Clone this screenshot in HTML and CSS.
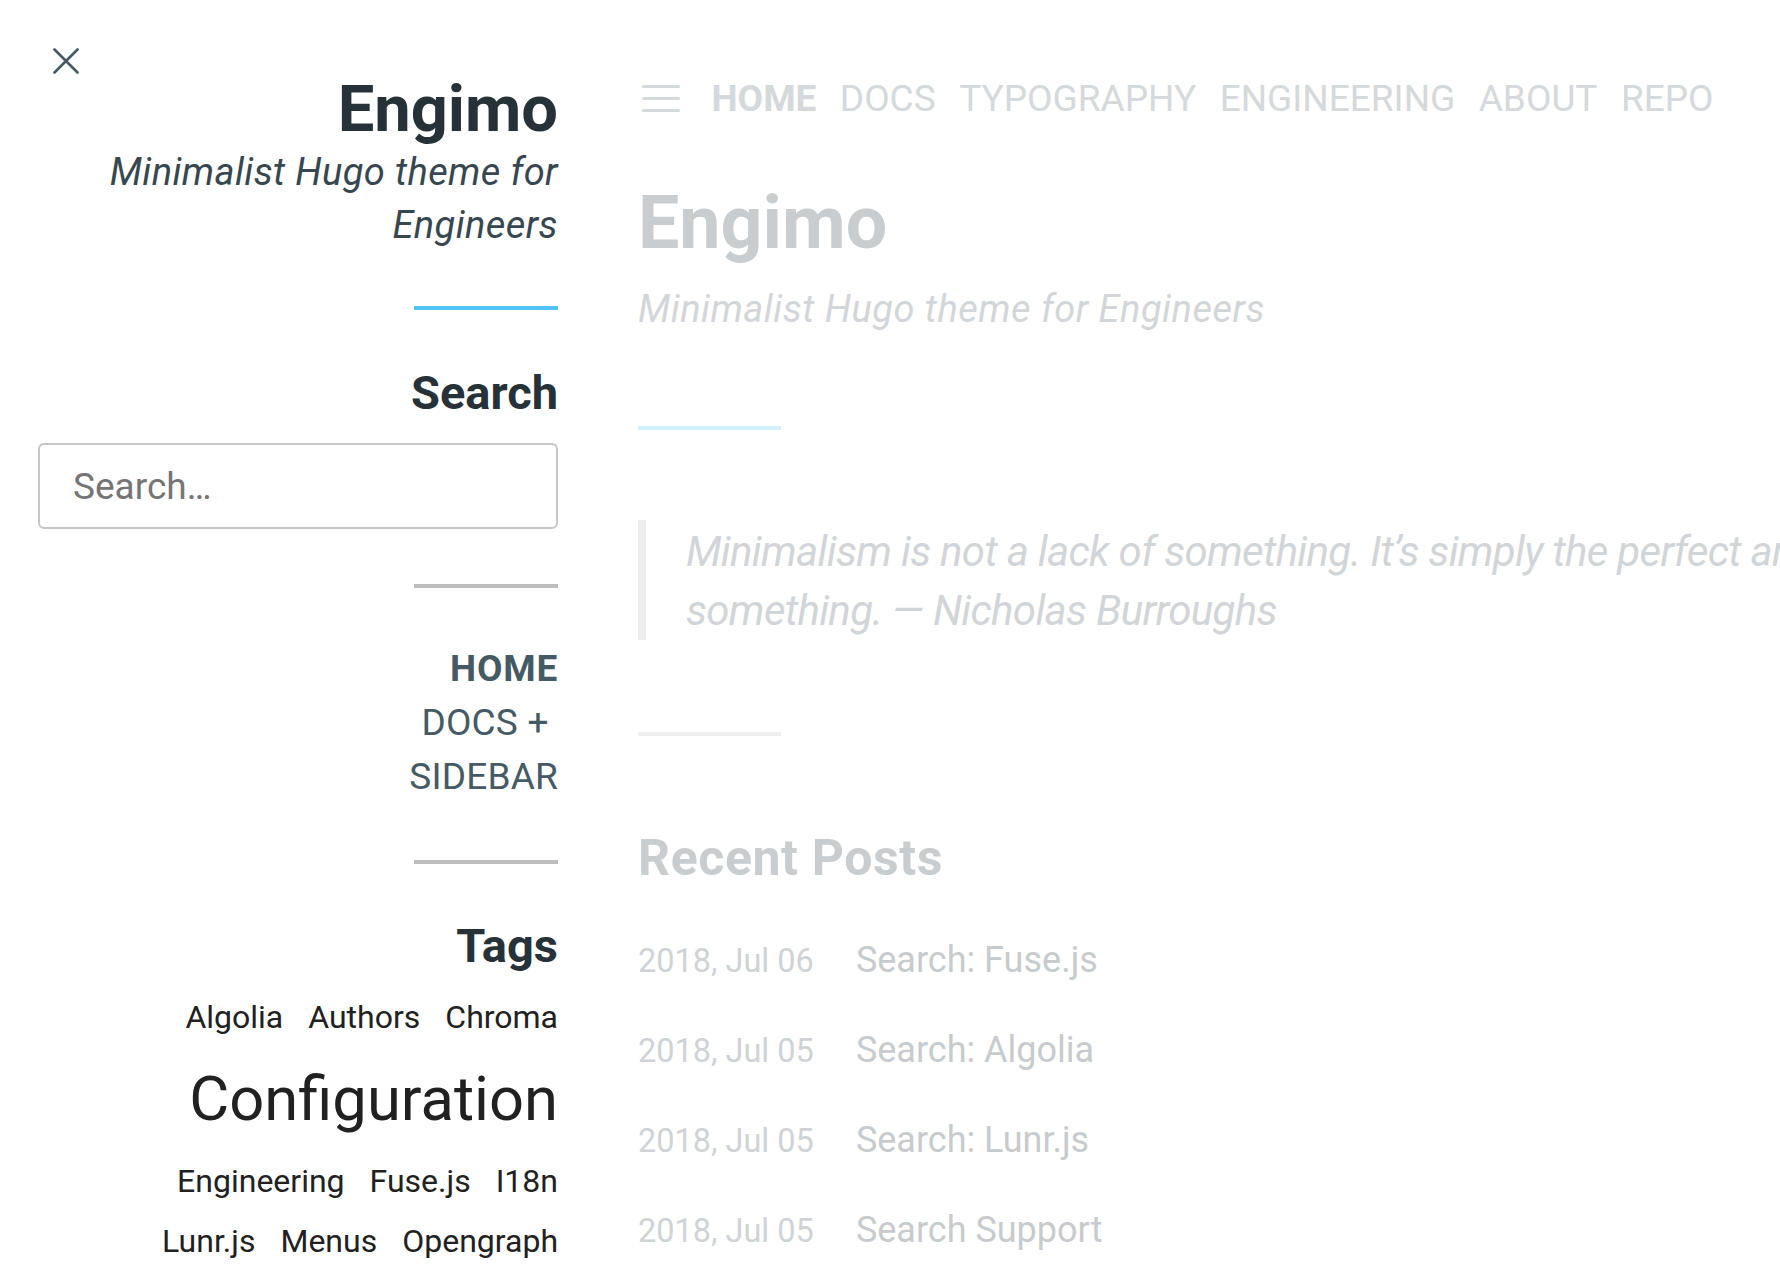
FILE: index.html
```html
<!DOCTYPE html>
<html lang="en">
<head>
<meta charset="utf-8">
<title>Engimo</title>
<link rel="stylesheet" href="styles.css">
</head>
<body>
<div class="layout">
  <aside class="sidebar">
    <button class="close" aria-label="Close sidebar">
      <svg width="26" height="26" viewBox="0 0 26 26"><path d="M1.5 1.5 L24.5 24.5 M24.5 1.5 L1.5 24.5" stroke="#455a64" stroke-width="2.6" stroke-linecap="round" fill="none"/></svg>
    </button>
    <header class="brand">
      <h1 class="brand-title">Engimo</h1>
      <p class="brand-sub">Minimalist Hugo theme for Engineers</p>
    </header>
    <hr class="rule rule-blue">
    <section class="widget">
      <h2 class="widget-title">Search</h2>
      <input class="search-input" type="text" placeholder="Search…">
    </section>
    <hr class="rule rule-gray rule-search">
    <nav class="side-nav">
      <a class="side-link active" href="#">HOME</a>
      <a class="side-link" href="#">DOCS +&nbsp; SIDEBAR</a>
    </nav>
    <hr class="rule rule-gray rule-nav">
    <section class="widget">
      <h2 class="widget-title tags-title">Tags</h2>
      <ul class="tag-cloud">
        <li><a href="#">Algolia</a></li>
        <li><a href="#">Authors</a></li>
        <li><a href="#">Chroma</a></li>
        <li class="tag-big"><a href="#">Configuration</a></li>
        <li><a href="#">Engineering</a></li>
        <li><a href="#">Fuse.js</a></li>
        <li><a href="#">I18n</a></li>
        <li><a href="#">Lunr.js</a></li>
        <li><a href="#">Menus</a></li>
        <li><a href="#">Opengraph</a></li>
      </ul>
    </section>
  </aside>

  <main class="content">
    <div class="topnav">
      <svg class="burger" width="38" height="27" viewBox="0 0 38 27"><path d="M1.5 1.5 H36.5 M1.5 13.5 H36.5 M1.5 25.5 H36.5" stroke="#d5d9dc" stroke-width="3" stroke-linecap="round" fill="none"/></svg>
      <a class="top-link active" href="#">HOME</a>
      <a class="top-link" href="#">DOCS</a>
      <a class="top-link" href="#">TYPOGRAPHY</a>
      <a class="top-link" href="#">ENGINEERING</a>
      <a class="top-link" href="#">ABOUT</a>
      <a class="top-link" href="#">REPO</a>
    </div>
    <h1 class="site-title">Engimo</h1>
    <p class="site-sub">Minimalist Hugo theme for Engineers</p>
    <hr class="rule rule-blue-faded">
    <blockquote class="quote">Minimalism is not a lack of something. It’s simply the perfect amount of<br>something. — Nicholas Burroughs</blockquote>
    <hr class="rule rule-gray-faded">
    <h2 class="recent-title">Recent Posts</h2>
    <ul class="post-list">
      <li><span class="post-date">2018, Jul 06</span><a class="post-title" href="#">Search: Fuse.js</a></li>
      <li><span class="post-date">2018, Jul 05</span><a class="post-title" href="#">Search: Algolia</a></li>
      <li><span class="post-date">2018, Jul 05</span><a class="post-title" href="#">Search: Lunr.js</a></li>
      <li><span class="post-date">2018, Jul 05</span><a class="post-title" href="#">Search Support</a></li>
    </ul>
  </main>
</div>
</body>
</html>
```

FILE: styles.css
```css
html, body {
  margin: 0;
  padding: 0;
  background: #ffffff;
  overflow: hidden;
}

body {
  font-family: Roboto, "Liberation Sans", sans-serif;
  width: 1780px;
  height: 1288px;
}

a {
  text-decoration: none;
  color: inherit;
}

.layout {
  display: flex;
  align-items: flex-start;
  gap: 58px;
}

/* ---------- Sidebar ---------- */
.sidebar {
  flex: 0 0 580px;
  box-sizing: border-box;
  padding: 0 22px 0 38px;
  text-align: right;
  background: #ffffff;
}

.close {
  display: block;
  margin: 48px 0 0 15px;
  padding: 0;
  border: 0;
  background: none;
  width: 26px;
  height: 26px;
  line-height: 0;
  cursor: pointer;
}

.brand-title {
  margin: 3px 0 0;
  font-size: 65px;
  line-height: 64px;
  font-weight: 700;
  color: #263238;
}

.brand-sub {
  margin: 5px 0 0;
  font-size: 38px;
  line-height: 53px;
  letter-spacing: 0.4px;
  font-style: italic;
  color: #37474f;
}

.rule {
  display: block;
  border: 0;
  height: 4px;
  width: 144px;
  padding: 0;
}

.rule-blue {
  margin: 54px 0 0 auto;
  background: #4fc3f7;
}

.widget-title {
  margin: 60px 0 0;
  font-size: 47px;
  line-height: 46px;
  font-weight: 700;
  color: #263238;
}

.search-input {
  display: block;
  box-sizing: border-box;
  width: 100%;
  height: 86px;
  margin: 27px 0 0;
  padding: 0 33px;
  border: 2px solid #c6c6c6;
  border-radius: 6px;
  font-family: Roboto, "Liberation Sans", sans-serif;
  font-size: 37px;
  color: #333;
  background: #fff;
  outline: none;
}

.search-input::placeholder {
  color: #757575;
}

.rule-gray {
  background: #bdbdbd;
  margin-left: auto;
  margin-right: 0;
}

.rule-search {
  margin-top: 55px;
}

.side-nav {
  margin-top: 54px;
  display: flex;
  flex-direction: column;
  align-items: flex-end;
  font-size: 37px;
  line-height: 54px;
  color: #455a64;
}

.side-link {
  max-width: 160px;
  letter-spacing: 0.2px;
}

.side-link.active {
  font-weight: 700;
  letter-spacing: 0.8px;
}

.rule-nav {
  margin-top: 56px;
}

.tags-title {
  margin-top: 59px;
}

.tag-cloud {
  list-style: none;
  margin: 18px 0 0 auto;
  padding: 0;
  max-width: 470px;
  display: flex;
  flex-wrap: wrap;
  justify-content: flex-end;
  align-items: baseline;
  column-gap: 25px;
  font-size: 32px;
  line-height: 60px;
  color: #212121;
}

.tag-big {
  font-size: 61.5px;
  line-height: 104px;
}

/* ---------- Main (dimmed behind open sidebar) ---------- */
.content {
  flex: 0 0 1500px;
}

.topnav {
  margin-top: 78px;
  height: 40px;
  display: flex;
  align-items: center;
  gap: 23.5px;
  font-size: 37px;
  line-height: 37px;
  color: #d5d9dc;
}

.burger {
  display: block;
  margin-left: 4px;
  margin-right: 8px;
}

.top-link.active {
  font-weight: 700;
}

.site-title {
  margin: 69px 0 0;
  font-size: 73.5px;
  line-height: 72px;
  font-weight: 700;
  color: #c9cdd0;
}

.site-sub {
  margin: 32px 0 0;
  font-size: 38px;
  line-height: 36px;
  letter-spacing: 0.5px;
  font-style: italic;
  color: #d3d6d9;
}

.rule-blue-faded {
  margin: 99px 0 0;
  width: 143px;
  background: #d4f0fc;
}

.quote {
  margin: 90px 0 0;
  padding: 2px 0 0 40px;
  border-left: 8px solid #ededed;
  font-size: 42px;
  line-height: 59px;
  letter-spacing: -0.7px;
  font-style: italic;
  color: #d2d5d8;
  white-space: nowrap;
}

.rule-gray-faded {
  margin: 92px 0 0;
  width: 143px;
  background: #efefef;
}

.recent-title {
  margin: 98px 0 0;
  font-size: 50px;
  line-height: 48px;
  letter-spacing: 0.6px;
  font-weight: 700;
  color: #c9cdd0;
}

.post-list {
  list-style: none;
  margin: 58px 0 0;
  padding: 0;
}

.post-list li {
  display: flex;
  align-items: baseline;
  line-height: 40px;
  margin-bottom: 49px;
}

.post-date {
  font-size: 32.5px;
  color: #d0d3d5;
  margin-right: 42px;
}

.post-title {
  font-size: 36px;
  color: #c8cbcd;
}
```
